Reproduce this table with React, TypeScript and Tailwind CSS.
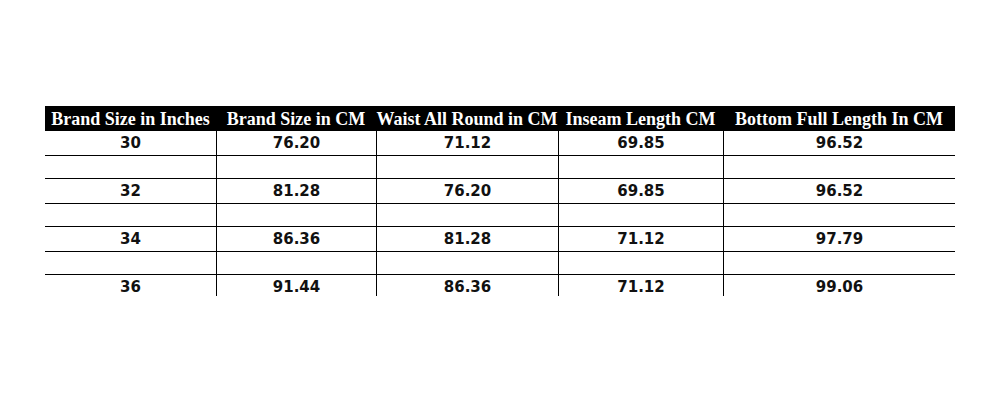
import React from "react";

const headers = [
  "Brand Size in Inches",
  "Brand Size in CM",
  "Waist All Round in CM",
  "Inseam Length CM",
  "Bottom Full Length In CM",
];

const rows: string[][] = [
  ["30", "76.20", "71.12", "69.85", "96.52"],
  ["", "", "", "", ""],
  ["32", "81.28", "76.20", "69.85", "96.52"],
  ["", "", "", "", ""],
  ["34", "86.36", "81.28", "71.12", "97.79"],
  ["", "", "", "", ""],
  ["36", "91.44", "86.36", "71.12", "99.06"],
];

export default function App() {
  return (
    <div className="w-[1000px] h-[400px] bg-white pt-[106px] pl-[45px]">
      <div className="w-[910px] h-[190px] overflow-hidden">
        <div className="grid grid-cols-[171px_160px_182px_165px_232px] bg-black h-[25px] items-center">
          {headers.map((h, i) => (
            <div
              key={i}
              className="text-white text-center font-bold text-[18px] leading-none whitespace-nowrap pt-[1px]"
              style={{ fontFamily: '"Liberation Serif", serif' }}
            >
              {h}
            </div>
          ))}
        </div>
        {rows.map((r, ri) => (
          <div key={ri} className="grid grid-cols-[171px_160px_182px_165px_232px] h-[24px]">
            {r.map((c, ci) => (
              <div
                key={ci}
                className={`flex items-center justify-center border-b border-black text-[15px] font-bold text-[#111] pt-[1px] ${ci > 0 ? "border-l" : ""}`}
                style={{ fontFamily: '"DejaVu Sans", sans-serif' }}
              >
                {c}
              </div>
            ))}
          </div>
        ))}
      </div>
    </div>
  );
}
